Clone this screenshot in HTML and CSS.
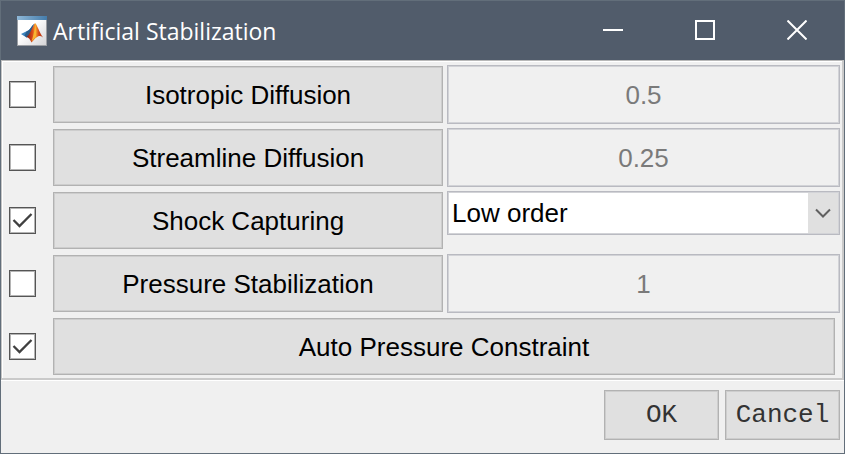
FILE: index.html
```
<!DOCTYPE html>
<html lang="en">
<head>
<meta charset="utf-8">
<title>Artificial Stabilization</title>
<link rel="stylesheet" href="styles.css">
</head>
<body>
<div class="window">
  <header class="titlebar">
    <svg class="logo" viewBox="0 0 30 30" aria-hidden="true">
      <defs>
        <linearGradient id="paper" x1="0" y1="0" x2="1" y2="1"><stop offset=".4" stop-color="#fff"/><stop offset="1" stop-color="#d3d3d6"/></linearGradient>
        <linearGradient id="bar"><stop offset="0" stop-color="#8fb8d8"/><stop offset="1" stop-color="#447cab"/></linearGradient>
        <linearGradient id="flame"><stop offset="0" stop-color="#7c1d12"/><stop offset=".35" stop-color="#d9481a"/><stop offset=".55" stop-color="#f9a32c"/><stop offset=".75" stop-color="#d4461a"/><stop offset="1" stop-color="#b23a18"/></linearGradient>
      </defs>
      <rect x=".5" y=".5" width="29" height="29" fill="url(#paper)" stroke="#9b9ea3"/>
      <rect width="30" height="4" fill="url(#bar)"/>
      <path d="M4 18L10 15C13 14.500 14 10.500 17 8L14 17.500L9.500 21.500Z" fill="#3c83bd"/>
      <path d="M10 15C13 14.500 14 10.500 17 8L13.500 18.500L9.500 21.500L7.500 19.500Z" fill="#2b5d8a"/>
      <path d="M9.500 21C13 18.500 15 11.500 18 7C20 8.500 22 15.500 26 21.500C22 18.500 20 20.500 14.500 26.500C13 23.500 12 21.500 9.500 21Z" fill="url(#flame)"/>
      <path d="M18 8C18 14 16 21 14.500 25.500C17 23.500 18 21 19 20C19.500 15 19 11 18 8Z" fill="#f8b532"/>
    </svg>
    <h1 class="title">Artificial Stabilization</h1>
    <button class="caption" type="button" aria-label="Minimize"><svg viewBox="0 0 20 20"><path d="M0 10H20"/></svg></button>
    <button class="caption" type="button" aria-label="Maximize"><svg viewBox="0 0 20 20"><path d="M1 1H19V19H1Z"/></svg></button>
    <button class="caption" type="button" aria-label="Close"><svg viewBox="0 0 20 20"><path d="M.5.5L19.500 19.500M19.500.5L.5 19.500"/></svg></button>
  </header>
  <form class="form">
    <div class="panel">
      <input class="check" type="checkbox" aria-label="Enable isotropic diffusion">
      <button class="option" type="button">Isotropic Diffusion</button>
      <input class="field" type="text" value="0.5" aria-label="Isotropic diffusion value" disabled>

      <input class="check" type="checkbox" aria-label="Enable streamline diffusion">
      <button class="option" type="button">Streamline Diffusion</button>
      <input class="field" type="text" value="0.25" aria-label="Streamline diffusion value" disabled>

      <input class="check" type="checkbox" aria-label="Enable shock capturing" checked>
      <button class="option" type="button">Shock Capturing</button>
      <div class="combo">
        <select class="select" aria-label="Shock capturing order"><option>Low order</option></select>
        <span class="arrow"><svg viewBox="0 0 16 10"><path d="M1 1.500L8 8.500L15 1.500"/></svg></span>
      </div>

      <input class="check" type="checkbox" aria-label="Enable pressure stabilization">
      <button class="option" type="button">Pressure Stabilization</button>
      <input class="field" type="text" value="1" aria-label="Pressure stabilization value" disabled>

      <input class="check" type="checkbox" aria-label="Enable auto pressure constraint" checked>
      <button class="option wide" type="button">Auto Pressure Constraint</button>
    </div>
    <footer class="actions">
      <button class="action" type="submit">OK</button>
      <button class="action" type="button">Cancel</button>
    </footer>
  </form>
</div>
</body>
</html>
```
FILE: styles.css
```
* { box-sizing: border-box; }
body {
  margin: 0;
  background: #f0f0f0;
  font-family: "Liberation Sans", Arial, sans-serif;
}
button, input, select { margin: 0; font: inherit; border-radius: 0; }
.window {
  display: flex;
  flex-direction: column;
  min-height: 100vh;
  border: 1px solid #626e7a;
  background: #f0f0f0;
}
.titlebar {
  display: flex;
  align-items: center;
  height: 59px;
  padding: 0 1px 0 16px;
  background: #515c6b;
}
.logo { width: 30px; height: 30px; }
.title {
  flex: 1;
  margin: 0 0 0 6px;
  color: #fff;
  font: 400 23px/30px "Open Sans", sans-serif;
}
.caption {
  display: flex;
  align-items: center;
  justify-content: center;
  width: 92px;
  height: 57px;
  margin-bottom: 2px;
  padding: 0;
  border: 0;
  background: none;
}
.caption svg {
  width: 20px;
  height: 20px;
  fill: none;
  stroke: #fff;
  stroke-width: 2;
}
.form { display: flex; flex-direction: column; }
.panel {
  display: grid;
  grid-template-columns: 40px 390fr 393fr;
  grid-auto-rows: 59px;
  gap: 4px;
  align-items: center;
  padding: 4px 2px 2px 7px;
  border: 2px solid #cacaca;
  border-top: 1px solid #b8b8b8;
  border-left: 1px solid #c4c4c4;
  box-shadow: inset 1px 1px #fff, 0 1px #fff;
  font-size: 26px;
}
.check {
  appearance: none;
  width: 27px;
  height: 27px;
  border: 1px solid #555;
  box-shadow: inset 0 0 0 1px #b4b4b4;
  background: #fff;
}
.check:checked {
  background: #fff url("data:image/svg+xml,%3Csvg xmlns='http://www.w3.org/2000/svg' viewBox='0 0 23 23'%3E%3Cpath d='M2.500 11L8.500 17L20.500 5' fill='none' stroke='%23404040' stroke-width='2.300'/%3E%3C/svg%3E") center / 23px 23px no-repeat;
}
.option, .action {
  padding: 0;
  border: 1px solid #b2b2b2;
  box-shadow: inset 0 0 0 1px #cdcdcd;
  background: #e0e0e0;
  color: #000;
}
.option { height: 57px; padding-top: 1px; }
.wide { grid-column: 2 / 4; margin-right: 5px; }
.field {
  width: 100%;
  height: 59px;
  padding: 1px 0 0;
  border: 1px solid #b9bac1;
  box-shadow: inset 0 0 0 1px #d2d3d7;
  background: #f0f0f0;
  color: #7a7a7a;
  text-align: center;
}
.combo {
  display: flex;
  align-self: start;
  position: relative;
  height: 44px;
  border: 1px solid #b9bac1;
  box-shadow: inset 0 0 0 1px #d2d3d7;
  background: #fff;
}
.select {
  appearance: none;
  flex: 1;
  padding: 0 32px 0 4px;
  border: 0;
  background: none;
  color: #000;
}
.arrow {
  position: absolute;
  inset: 1px 1px 1px auto;
  display: flex;
  align-items: center;
  justify-content: center;
  width: 30px;
  background: #e0e0e0;
  pointer-events: none;
}
.arrow svg {
  width: 16px;
  height: 10px;
  fill: none;
  stroke: #606060;
  stroke-width: 2;
}
.actions {
  display: flex;
  justify-content: flex-end;
  gap: 6px;
  padding: 10px 4px 12px;
}
.action {
  width: 115px;
  height: 50px;
  font: 26px "Liberation Mono", "Courier New", monospace;
  color: #333;
}
```
